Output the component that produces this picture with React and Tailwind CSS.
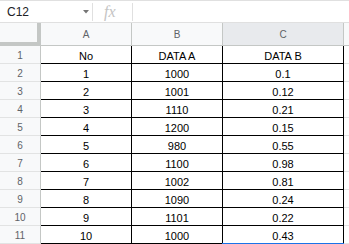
import React from 'react';

const rows = [
  ['No', 'DATA A', 'DATA B'],
  ['1', '1000', '0.1'],
  ['2', '1001', '0.12'],
  ['3', '1110', '0.21'],
  ['4', '1200', '0.15'],
  ['5', '980', '0.55'],
  ['6', '1100', '0.98'],
  ['7', '1002', '0.81'],
  ['8', '1090', '0.24'],
  ['9', '1101', '0.22'],
  ['10', '1000', '0.43'],
];

const cols = [
  { name: 'A', w: 'w-[91px]', active: false },
  { name: 'B', w: 'w-[91px]', active: false },
  { name: 'C', w: 'w-[121px]', active: true },
];

const App = () => {
  return (
    <div
      className="w-[349px] h-[244px] overflow-hidden bg-white"
      style={{ fontFamily: '"Liberation Sans", Arial, sans-serif' }}
    >
      {/* Formula bar */}
      <div className="flex items-center h-[23px] border-t border-b border-[#e0e0e0] bg-white">
        <div className="w-[80px] pl-[7px] text-[12px] text-[#202124]">C12</div>
        <div className="w-[12px] flex justify-center">
          <svg width="6" height="4" viewBox="0 0 6 4">
            <path d="M0 0h6L3 3.5z" fill="#757575" />
          </svg>
        </div>
        <div className="w-px h-[18px] bg-[#e0e0e0]" />
        <div
          className="w-[39px] pl-[11px] text-[16px] italic text-[#c4c4c4] leading-none"
          style={{ fontFamily: '"Liberation Serif", "Times New Roman", serif' }}
        >
          fx
        </div>
        <div className="w-px h-[18px] bg-[#e0e0e0]" />
      </div>

      {/* Column headers */}
      <div className="flex h-[23px]">
        <div className="w-[41px] shrink-0 bg-[#f8f9fa] border-r-4 border-b-4 border-[#c4c7c5]" />
        {cols.map((c) => (
          <div
            key={c.name}
            className={`${c.w} shrink-0 flex items-center justify-center text-[10px] text-[#5f6368] border-r border-b border-[#c4c7c5] ${
              c.active ? 'bg-[#e8eaed]' : 'bg-[#f8f9fa]'
            }`}
          >
            {c.name}
          </div>
        ))}
        <div className="flex-1 bg-[#f8f9fa] border-b border-[#c4c7c5]" />
      </div>

      {/* Rows */}
      {rows.map((r, i) => (
        <div key={i} className="flex h-[18px]">
          <div className="w-[41px] shrink-0 flex items-center justify-center pt-[2px] text-[10px] text-[#5f6368] bg-[#f8f9fa] border-r border-b border-r-[#c4c7c5] border-b-[#e2e3e3]">
            {i + 1}
          </div>
          {r.map((v, j) => (
            <div
              key={j}
              className={`${cols[j].w} shrink-0 relative flex items-end justify-center text-[11px] leading-[13px] text-black border-r border-b border-black`}
            >
              {v}
              {i === rows.length - 1 && j === 2 && (
                <div className="absolute left-[-1px] right-[-1px] bottom-[-2px] h-[2px] bg-[#1a73e8]" />
              )}
            </div>
          ))}
          <div className="flex-1 border-b border-[#e2e3e3]" />
        </div>
      ))}
    </div>
  );
};

export default App;
